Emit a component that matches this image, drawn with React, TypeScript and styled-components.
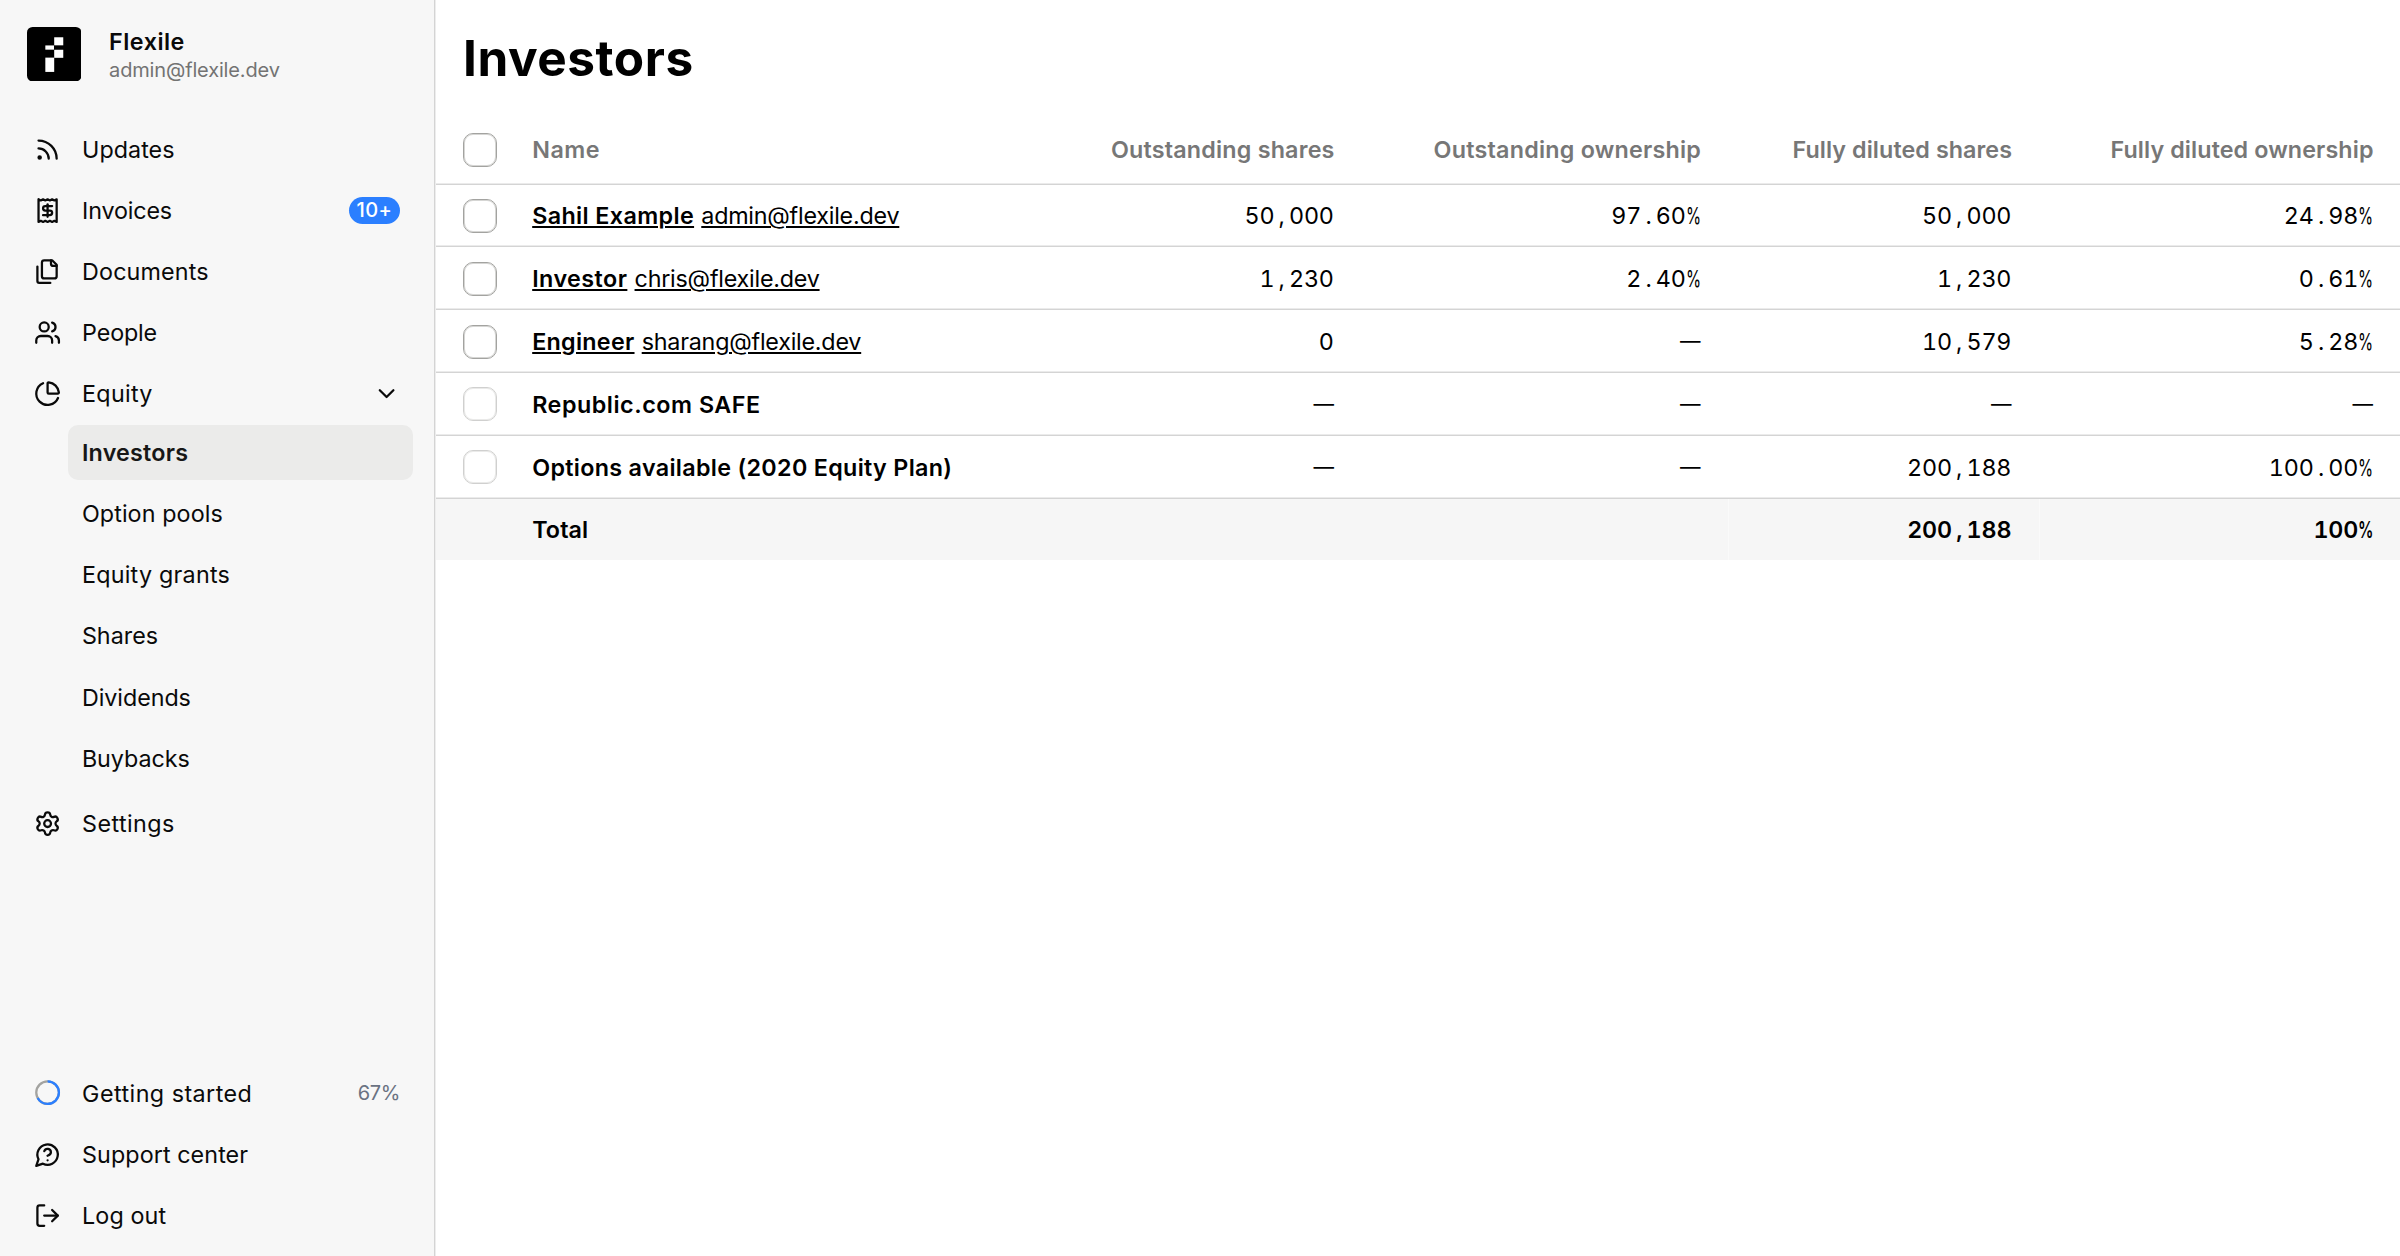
import React from "react";
import styled, { createGlobalStyle, css } from "styled-components";

const GlobalStyle = createGlobalStyle`
  *, *::before, *::after { box-sizing: border-box; }
  body {
    margin: 0;
    background: #fff;
    color: #000;
    font-family: Inter, "Liberation Sans", sans-serif;
    font-size: 23.3px;
  }
`;

const Shell = styled.div`
  display: flex;
  height: 1256px;
  overflow: hidden;
`;

/* ---------- Sidebar ---------- */

const Sidebar = styled.aside`
  display: flex;
  flex-direction: column;
  width: 436px;
  flex: none;
  padding-bottom: 13.4px;
  background: #f7f7f7;
  border-right: 1px solid #ededed;
  box-shadow: inset -1px 0 #d4d4d4;
  color: #0a0a0a;
`;

const Company = styled.header`
  display: flex;
  align-items: flex-start;
  gap: 27.7px;
  height: 122px;
  padding: 27px 27px 0;
`;

const CompanyText = styled.div`
  display: flex;
  flex-direction: column;
  line-height: 29px;
`;

const CompanyName = styled.strong`
  font-weight: 600;
  letter-spacing: 0.5px;
`;

const CompanyEmail = styled.span`
  color: #737373;
  font-size: 20px;
  letter-spacing: -0.15px;
`;

const Menu = styled.nav`
  display: flex;
  flex-direction: column;
  gap: 6.8px;
  padding: 0 20.4px;
`;

const FooterMenu = styled(Menu)`
  margin-top: auto;
`;

const SubMenu = styled.div`
  display: flex;
  flex-direction: column;
  gap: 6.8px;
  margin: -2.8px 0 4px 47.6px;
`;

const itemBase = css`
  display: flex;
  align-items: center;
  height: 54.4px;
  white-space: nowrap;
`;

const MenuItem = styled.a`
  ${itemBase}
  gap: 20.9px;
  padding: 0 14.6px 0 13.6px;
`;

const SubItem = styled.a<{ $active?: boolean }>`
  ${itemBase}
  width: 345px;
  padding-left: 13.9px;
  border-radius: 10px;
  background: ${(p) => (p.$active ? "#ebebea" : "transparent")};
  color: ${(p) => (p.$active ? "#171717" : "inherit")};
  font-weight: ${(p) => (p.$active ? 600 : 400)};
`;

const Label = styled.span<{ $track?: number }>`
  letter-spacing: ${(p) => p.$track ?? 0}px;
`;

const Badge = styled.span`
  display: flex;
  align-items: center;
  justify-content: center;
  width: 51.4px;
  height: 27px;
  margin-left: auto;
  border-radius: 14px;
  background: #2b7fff;
  color: #fff;
  font-size: 20px;
  font-weight: 500;
  letter-spacing: 0.3px;
`;

const Percent = styled.span`
  margin-left: auto;
  color: #6a7282;
  font-size: 20px;
  letter-spacing: -0.33px;
`;

const IconSvg = styled.svg`
  width: 27.2px;
  height: 27.2px;
  flex: none;
  fill: none;
  stroke: currentColor;
  stroke-width: 2;
  stroke-linecap: round;
  stroke-linejoin: round;
`;

const Chevron = styled(IconSvg)`
  margin-left: auto;
`;

const Logo = () => (
  <svg width="54.4" height="54.4" viewBox="0 0 54 54">
    <rect width="54" height="54" rx="5.5" fill="#000" />
    <g fill="#fff">
      <rect x="27" y="10.2" width="9" height="8" />
      <rect x="18.2" y="18.3" width="8.6" height="4.2" />
      <rect x="27" y="22.6" width="9" height="8" />
      <rect x="18.2" y="30.4" width="8.8" height="14.2" />
    </g>
  </svg>
);

const icons: Record<string, React.ReactNode> = {
  rss: (
    <>
      <path d="M4 11a9 9 0 0 1 9 9" />
      <path d="M4 4a16 16 0 0 1 16 16" />
      <circle cx="5" cy="19" r="1" />
    </>
  ),
  receipt: (
    <>
      <path d="M4 2v20l2-1 2 1 2-1 2 1 2-1 2 1 2-1 2 1V2l-2 1-2-1-2 1-2-1-2 1-2-1-2 1Z" />
      <path d="M16 8h-6a2 2 0 1 0 0 4h4a2 2 0 1 1 0 4H8" />
      <path d="M12 17.5v-11" />
    </>
  ),
  files: (
    <>
      <path d="M20 7h-3a2 2 0 0 1-2-2V2" />
      <path d="M9 18a2 2 0 0 1-2-2V4a2 2 0 0 1 2-2h7l4 4v10a2 2 0 0 1-2 2Z" />
      <path d="M3 7.6v12.8A1.6 1.6 0 0 0 4.6 22h9.8" />
    </>
  ),
  users: (
    <>
      <path d="M16 21v-2a4 4 0 0 0-4-4H6a4 4 0 0 0-4 4v2" />
      <circle cx="9" cy="7" r="4" />
      <path d="M22 21v-2a4 4 0 0 0-3-3.87" />
      <path d="M16 3.13a4 4 0 0 1 0 7.75" />
    </>
  ),
  pie: (
    <>
      <path d="M21 12c.552 0 1.005-.449.95-.998a10 10 0 0 0-8.953-8.951c-.55-.055-.998.398-.998.95v8a1 1 0 0 0 1 1z" />
      <path d="M21.21 15.89A10 10 0 1 1 8 2.83" />
    </>
  ),
  settings: (
    <>
      <path d="M9.671 4.136a2.34 2.34 0 0 1 4.659 0 2.34 2.34 0 0 0 3.319 1.915 2.34 2.34 0 0 1 2.33 4.033 2.34 2.34 0 0 0 0 3.831 2.34 2.34 0 0 1-2.33 4.033 2.34 2.34 0 0 0-3.319 1.915 2.34 2.34 0 0 1-4.659 0 2.34 2.34 0 0 0-3.32-1.915 2.34 2.34 0 0 1-2.33-4.033 2.34 2.34 0 0 0 0-3.831A2.34 2.34 0 0 1 6.35 6.051a2.34 2.34 0 0 0 3.319-1.915" />
      <circle cx="12" cy="12" r="3" />
    </>
  ),
  progress: (
    <>
      <circle cx="12" cy="12" r="10" stroke="#a3a3a0" />
      <circle
        cx="12"
        cy="12"
        r="10"
        stroke="#2b7fff"
        strokeLinecap="butt"
        pathLength={100}
        strokeDasharray="67 100"
        transform="rotate(-90 12 12)"
      />
    </>
  ),
  help: (
    <>
      <path d="M7.9 20A9 9 0 1 0 4 16.1L2 22Z" />
      <path d="M9.09 9a3 3 0 0 1 5.83 1c0 2-3 3-3 3" />
      <path d="M12 17h.01" />
    </>
  ),
  logout: (
    <>
      <path d="M9 21H5a2 2 0 0 1-2-2V5a2 2 0 0 1 2-2h4" />
      <path d="m16 17 5-5-5-5" />
      <path d="M21 12H9" />
    </>
  ),
};

const Icon = ({ name }: { name: string }) => (
  <IconSvg viewBox="0 0 24 24">{icons[name]}</IconSvg>
);

interface NavProps {
  icon: string;
  label: string;
  track?: number;
  children?: React.ReactNode;
}

const NavItem = ({ icon, label, track, children }: NavProps) => (
  <MenuItem>
    <Icon name={icon} />
    <Label $track={track}>{label}</Label>
    {children}
  </MenuItem>
);

const equityPages = [
  { label: "Investors", track: 0.22, active: true },
  { label: "Option pools", track: 0.1 },
  { label: "Equity grants", track: 0.25 },
  { label: "Shares", track: 0.03 },
  { label: "Dividends", track: -0.04 },
  { label: "Buybacks", track: -0.05 },
];

/* ---------- Investors table ---------- */

const Main = styled.main`
  display: flex;
  flex-direction: column;
  flex: 1;
  min-width: 0;
`;

const Title = styled.h1`
  margin: 0;
  height: 115.2px;
  padding-left: 27px;
  font-size: 49.5px;
  line-height: 116px;
  font-weight: 700;
  letter-spacing: 0.55px;
`;

const Row = styled.div<{ $kind?: "head" | "total" }>`
  display: grid;
  grid-template-columns: 69px 1fr 276px 366.5px 311px 361.5px;
  align-items: stretch;
  height: 62.8px;
  box-shadow: inset 0 -1px #d4d4d4, inset 0 -2px #ebebeb;
  ${(p) =>
    p.$kind === "head" &&
    css`
      height: 69.4px;
      color: #777;
      font-weight: 600;
    `}
  ${(p) =>
    p.$kind === "total" &&
    css`
      height: 61.4px;
      box-shadow: none;
      background: #f6f6f6;
      font-weight: 600;
    `}
`;

const Cell = styled.div<{ $seam?: boolean }>`
  display: flex;
  align-items: center;
  padding-left: 27.2px;
  white-space: nowrap;
  ${(p) => p.$seam && "border-left: 1px solid #fafafa;"}
`;

const CheckCell = styled(Cell)`
  padding-left: 26.5px;
`;

const HeadCell = styled(Cell)`
  padding-bottom: 1.6px;
`;

const HeadNumberCell = styled(HeadCell)`
  justify-content: flex-end;
  padding-right: 26.4px;
`;

const NumberCell = styled(Cell)`
  justify-content: flex-end;
  padding-right: 27.2px;
  font-feature-settings: "tnum" 1;
  letter-spacing: -0.15px;
`;

const Checkbox = styled.span<{ $disabled?: boolean }>`
  width: 34px;
  height: 34px;
  flex: none;
  border: 1px solid #a3a3a0;
  border-radius: 10px;
  background: #fff;
  box-shadow: inset 0 0 0 1px #d6d6d4;
  opacity: ${(p) => (p.$disabled ? 0.5 : 1)};
`;

const InvestorName = styled.strong<{ $link?: boolean; $track: number }>`
  font-weight: 600;
  letter-spacing: ${(p) => p.$track}px;
  ${(p) => p.$link && "text-decoration: underline 2px; text-underline-offset: 2px;"}
`;

const InvestorEmail = styled.span`
  margin-left: 7.2px;
  letter-spacing: -0.22px;
  text-decoration: underline 2px;
  text-underline-offset: 2px;
`;

const Punct = styled.span`
  display: inline-block;
  width: 14.6px;
  text-align: center;
`;

const PercentSign = styled.span`
  display: inline-block;
  width: 14.6px;
  transform: scaleX(0.66);
  transform-origin: left;
`;

const Dash = styled.span`
  font-size: 20.5px;
  transform: translateY(-1.5px);
`;

const Figure = ({ value }: { value: string }) =>
  value === "—" ? (
    <Dash>—</Dash>
  ) : (
    <span>
      {value.split(/([,.%])/).map((part, i) =>
        part === "%" ? (
          <PercentSign key={i}>%</PercentSign>
        ) : part === "," || part === "." ? (
          <Punct key={i}>{part}</Punct>
        ) : (
          part
        )
      )}
    </span>
  );

const columns = [
  { label: "Outstanding shares", track: 0.2 },
  { label: "Outstanding ownership", track: 0.23 },
  { label: "Fully diluted shares", track: 0.08 },
  { label: "Fully diluted ownership", track: 0.11 },
];

const investors = [
  { name: "Sahil Example", track: 0.38, email: "admin@flexile.dev", values: ["50,000", "97.60%", "50,000", "24.98%"] },
  { name: "Investor", track: 0.45, email: "chris@flexile.dev", values: ["1,230", "2.40%", "1,230", "0.61%"] },
  { name: "Engineer", track: 0.28, email: "sharang@flexile.dev", values: ["0", "—", "10,579", "5.28%"] },
  { name: "Republic.com SAFE", track: 0.53, values: ["—", "—", "—", "—"] },
  { name: "Options available (2020 Equity Plan)", track: 0.32, values: ["—", "—", "200,188", "100.00%"] },
];

export default function App() {
  return (
    <>
      <GlobalStyle />
      <Shell>
        <Sidebar>
          <Company>
            <Logo />
            <CompanyText>
              <CompanyName>Flexile</CompanyName>
              <CompanyEmail>admin@flexile.dev</CompanyEmail>
            </CompanyText>
          </Company>
          <Menu>
            <NavItem icon="rss" label="Updates" track={0.04} />
            <NavItem icon="receipt" label="Invoices" track={-0.15}>
              <Badge>10+</Badge>
            </NavItem>
            <NavItem icon="files" label="Documents" track={0.15} />
            <NavItem icon="users" label="People" track={-0.13} />
            <NavItem icon="pie" label="Equity" track={0.3}>
              <Chevron viewBox="0 0 24 24">
                <path d="m6 9 6 6 6-6" />
              </Chevron>
            </NavItem>
            <SubMenu>
              {equityPages.map((page) => (
                <SubItem key={page.label} $active={page.active}>
                  <Label $track={page.track}>{page.label}</Label>
                </SubItem>
              ))}
            </SubMenu>
            <NavItem icon="settings" label="Settings" track={0.44} />
          </Menu>
          <FooterMenu>
            <NavItem icon="progress" label="Getting started" track={0.46}>
              <Percent>67%</Percent>
            </NavItem>
            <NavItem icon="help" label="Support center" track={0.08} />
            <NavItem icon="logout" label="Log out" track={0.1} />
          </FooterMenu>
        </Sidebar>
        <Main>
          <Title>Investors</Title>
          <Row $kind="head">
            <CheckCell>
              <Checkbox />
            </CheckCell>
            <HeadCell>
              <Label $track={0.5}>Name</Label>
            </HeadCell>
            {columns.map((column) => (
              <HeadNumberCell key={column.label}>
                <Label $track={column.track}>{column.label}</Label>
              </HeadNumberCell>
            ))}
          </Row>
          {investors.map((investor) => (
            <Row key={investor.name}>
              <CheckCell>
                <Checkbox $disabled={!investor.email} />
              </CheckCell>
              <Cell>
                <InvestorName $link={!!investor.email} $track={investor.track}>
                  {investor.name}
                </InvestorName>
                {investor.email && <InvestorEmail>{investor.email}</InvestorEmail>}
              </Cell>
              {investor.values.map((value, i) => (
                <NumberCell key={i}>
                  <Figure value={value} />
                </NumberCell>
              ))}
            </Row>
          ))}
          <Row $kind="total">
            <Cell />
            <Cell>
              <Label $track={0.1}>Total</Label>
            </Cell>
            <Cell />
            <Cell />
            <NumberCell $seam>
              <Figure value="200,188" />
            </NumberCell>
            <NumberCell $seam>
              <Figure value="100%" />
            </NumberCell>
          </Row>
        </Main>
      </Shell>
    </>
  );
}
